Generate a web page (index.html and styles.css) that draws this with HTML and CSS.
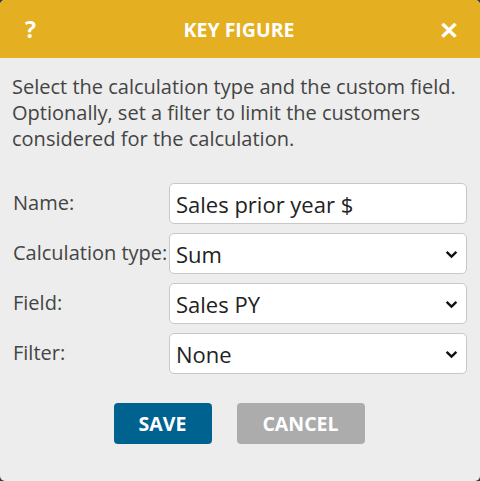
FILE: index.html
```html
<!DOCTYPE html>
<html>
<head>
<meta charset="utf-8">
<link rel="stylesheet" href="styles.css">
</head>
<body>
<div class="dialog">
  <div class="header">
    <span class="help">?</span>
    <span class="title">KEY FIGURE</span>
    <span class="close">✕</span>
  </div>
  <div class="body">
    <p class="desc">Select the calculation type and the custom field. Optionally, set a filter to limit the customers considered for the calculation.</p>
    <div class="form">
      <label class="lbl">Name:</label>
      <div class="field">Sales prior year $</div>
      <label class="lbl">Calculation type:</label>
      <div class="field select">Sum<svg class="chev" viewBox="0 0 12 8"><path d="M1.5 1.5 L6 6 L10.5 1.5" fill="none" stroke="#111" stroke-width="2.2"/></svg></div>
      <label class="lbl">Field:</label>
      <div class="field select">Sales PY<svg class="chev" viewBox="0 0 12 8"><path d="M1.5 1.5 L6 6 L10.5 1.5" fill="none" stroke="#111" stroke-width="2.2"/></svg></div>
      <label class="lbl">Filter:</label>
      <div class="field select">None<svg class="chev" viewBox="0 0 12 8"><path d="M1.5 1.5 L6 6 L10.5 1.5" fill="none" stroke="#111" stroke-width="2.2"/></svg></div>
    </div>
    <div class="buttons">
      <button class="btn save">SAVE</button>
      <button class="btn cancel">CANCEL</button>
    </div>
  </div>
</div>
</body>
</html>
```
FILE: styles.css
```css
html, body {
  margin: 0;
  padding: 0;
  background: #3a3a3a;
}
body {
  font-family: "Open Sans", "Noto Sans", sans-serif;
  width: 480px;
  height: 481px;
  overflow: hidden;
}
.dialog {
  width: 480px;
  height: 481px;
  background: #ededed;
  border-radius: 5px;
  overflow: hidden;
}
.header {
  height: 58px;
  background: #e5af22;
  color: #fff;
  display: flex;
  align-items: center;
  justify-content: space-between;
  padding: 0 21px 0 25px;
  font-weight: 700;
}
.help {
  font-size: 23px;
  width: 24px;
}
.title {
  font-size: 19.5px;
  margin-left: -6px;
}
.close {
  font-size: 24px;
  width: 24px;
  text-align: right;
}
.body {
  padding: 0 12px;
}
.desc {
  margin: 16px 0 0 0;
  font-size: 20px;
  line-height: 26px;
  color: #444;
}
.form {
  margin-top: 31px;
  display: grid;
  grid-template-columns: 157px 1fr;
  row-gap: 9px;
  align-items: center;
}
.lbl {
  font-size: 20px;
  color: #444;
  padding-left: 1px;
  margin-top: -3px;
  white-space: nowrap;
}
.field {
  height: 39px;
  background: #fff;
  border: 1px solid #c8c8c8;
  border-radius: 5px;
  font-size: 22px;
  color: #222;
  display: flex;
  align-items: center;
  padding: 0 0 0 6px;
  margin-right: 1px;
  position: relative;
}
.chev {
  position: absolute;
  right: 8px;
  top: 16px;
  width: 13px;
  height: 9px;
}
.buttons {
  display: flex;
  justify-content: center;
  gap: 25px;
  margin-top: 29px;
  padding-right: 2px;
}
.btn {
  height: 41px;
  border: none;
  border-radius: 4px;
  color: #fff;
  font-family: "Open Sans", "Noto Sans", sans-serif;
  font-weight: 700;
  font-size: 19.5px;
}
.save {
  width: 98px;
  background: #00638f;
}
.cancel {
  width: 128px;
  background: #acacac;
}
```
